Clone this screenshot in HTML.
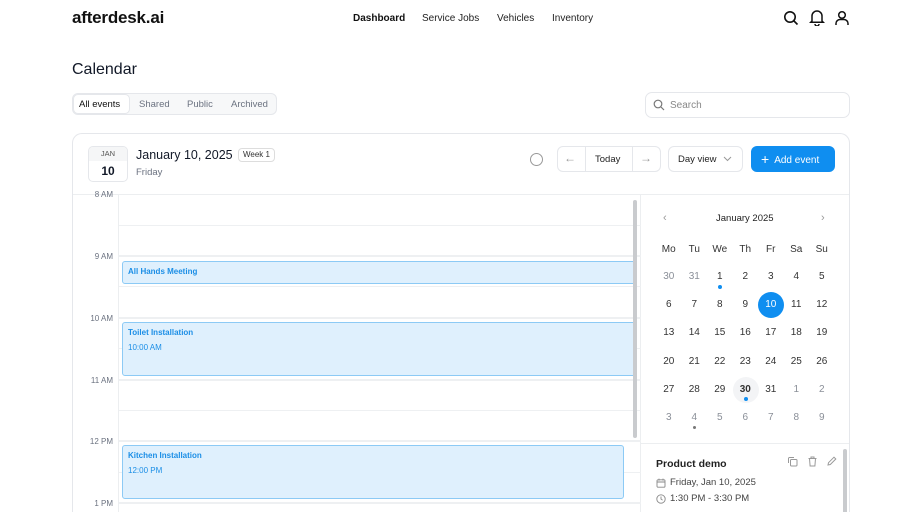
<!DOCTYPE html>
<html><head><meta charset="utf-8"><style>
*{box-sizing:border-box;margin:0;padding:0}
html,body{width:922px;height:512px;overflow:hidden}
body{background:#fff;font-family:"Liberation Sans",sans-serif;color:#111827;position:relative}
.a{position:absolute}
.logo{left:72px;top:8px;font-size:17px;font-weight:700;letter-spacing:-0.2px;color:#111}
.nav{top:13px;font-size:10px;color:#222}
.muted{color:#6b7280}
.card{left:72px;top:133px;width:778px;height:379px;border:1px solid #e5e7eb;border-bottom:none;border-radius:10px 10px 0 0;overflow:hidden}
.btn{border:1px solid #e5e7eb;border-radius:6px;background:#fff}
.hl{left:46px;width:522px;height:1px;background:#eef0f2}
.tl{width:40px;text-align:right;font-size:8px;color:#6b7280;left:0}
.ev{background:#dff0fd;border:1px solid #8ccaf5;border-radius:3px;color:#1b8ee6;font-size:8px;font-weight:700;padding:5px 5px}
.ev span{display:block;font-weight:400;margin-top:6px}
.d{width:25.5px;text-align:center;font-size:10px;color:#333}
.g{color:#8a8f98}
</style></head><body>
<div class="a logo">afterdesk.ai</div>
<div class="a nav" style="left:353px;font-weight:700;color:#111">Dashboard</div>
<div class="a nav" style="left:422px">Service Jobs</div>
<div class="a nav" style="left:497px">Vehicles</div>
<div class="a nav" style="left:552px">Inventory</div>
<svg class="a" style="left:783px;top:10px" width="16" height="16" viewBox="0 0 16 16" fill="none" stroke="#111" stroke-width="1.6"><circle cx="7" cy="7" r="5.2"/><path d="M11 11l3.5 3.5"/></svg>
<svg class="a" style="left:809px;top:9px" width="16" height="17" viewBox="0 0 16 17" fill="none" stroke="#111" stroke-width="1.5"><path d="M3 12V7a5 5 0 0110 0v5l1.3 1.3H1.7z"/><path d="M6 15a2 2 0 004 0"/></svg>
<svg class="a" style="left:834px;top:10px" width="16" height="16" viewBox="0 0 16 16" fill="none" stroke="#111" stroke-width="1.5"><circle cx="8" cy="5" r="3.3"/><path d="M2 15v-1.5a4 4 0 014-4h4a4 4 0 014 4V15"/></svg>

<div class="a" style="left:72px;top:61px;font-size:16px;font-weight:500">Calendar</div>
<div class="a" style="left:72px;top:93px;width:205px;height:22px;border:1px solid #e5e7eb;border-radius:6px;background:#f7f8f9"></div>
<div class="a btn" style="left:73px;top:94px;width:57px;height:20px;border-radius:5px"></div>
<div class="a" style="left:79px;top:99px;font-size:9.5px;color:#111">All events</div>
<div class="a muted" style="left:139px;top:99px;font-size:9.5px">Shared</div>
<div class="a muted" style="left:187px;top:99px;font-size:9.5px">Public</div>
<div class="a muted" style="left:231px;top:99px;font-size:9.5px">Archived</div>
<div class="a btn" style="left:645px;top:92px;width:205px;height:26px;border-radius:7px"></div>
<svg class="a" style="left:653px;top:99px" width="12" height="12" viewBox="0 0 12 12" fill="none" stroke="#777" stroke-width="1.2"><circle cx="5" cy="5" r="3.8"/><path d="M8 8l3 3"/></svg>
<div class="a" style="left:670px;top:100px;font-size:10px;color:#888">Search</div>

<div class="a card">
 <div class="a" style="left:15px;top:12px;width:40px;height:36px;border:1px solid #e5e7eb;border-radius:5px;overflow:hidden">
  <div style="height:14px;background:#f5f6f7;font-size:7.5px;text-align:center;line-height:14px;color:#555">JAN</div>
  <div style="font-size:12px;font-weight:700;text-align:center;line-height:20px">10</div>
 </div>
 <div class="a" style="left:63px;top:14px;font-size:12.5px;font-weight:500">January 10, 2025</div>
 <div class="a" style="left:165px;top:14px;height:14px;border:1px solid #ddd;border-radius:4px;font-size:8px;padding:0 4px;line-height:12px;color:#333">Week 1</div>
 <div class="a muted" style="left:63px;top:33px;font-size:9.5px">Friday</div>
 <div class="a" style="left:457px;top:19px;width:13px;height:13px;border:1.3px solid #999;border-radius:50%"></div>
 <div class="a btn" style="left:484px;top:12px;width:104px;height:26px"></div>
 <div class="a" style="left:512px;top:12px;width:1px;height:26px;background:#e5e7eb"></div>
 <div class="a" style="left:559px;top:12px;width:1px;height:26px;background:#e5e7eb"></div>
 <div class="a" style="left:491px;top:17px;font-size:12px;color:#999">←</div>
 <div class="a" style="left:522px;top:20px;font-size:9.5px;font-weight:500;color:#222">Today</div>
 <div class="a" style="left:567px;top:17px;font-size:12px;color:#999">→</div>
 <div class="a btn" style="left:595px;top:12px;width:75px;height:26px"></div>
 <div class="a" style="left:605px;top:20px;font-size:9.5px;color:#222">Day view</div>
 <svg class="a" style="left:650px;top:22px" width="9" height="6" viewBox="0 0 9 6" fill="none" stroke="#999" stroke-width="1"><path d="M1 1l3.5 3.5L8 1"/></svg>
 <div class="a" style="left:678px;top:12px;width:84px;height:26px;background:#0f8ef0;border-radius:6px;color:#fff;font-size:10px;line-height:26px;padding-left:10px"><span style="font-size:14px;vertical-align:-1px">+</span>&nbsp; Add event</div>
 <div class="a" style="left:0;top:60px;width:778px;height:1px;background:#eceef0"></div>
 <div class="a" style="left:45px;top:61px;width:1px;height:318px;background:#eceef0"></div>
 <div class="a" style="left:567px;top:61px;width:1px;height:318px;background:#eceef0"></div>
 <div class="a tl" style="top:56px">8 AM</div>
 <div class="a hl" style="top:91px"></div>
 <div class="a hl" style="top:121px;height:2px"></div>
 <div class="a tl" style="top:118px">9 AM</div>
 <div class="a hl" style="top:152px"></div>
 <div class="a hl" style="top:183px;height:2px"></div>
 <div class="a tl" style="top:180px">10 AM</div>
 <div class="a hl" style="top:214px"></div>
 <div class="a hl" style="top:245px;height:2px"></div>
 <div class="a tl" style="top:242px">11 AM</div>
 <div class="a hl" style="top:276px"></div>
 <div class="a hl" style="top:306px;height:2px"></div>
 <div class="a tl" style="top:303px">12 PM</div>
 <div class="a hl" style="top:338px"></div>
 <div class="a hl" style="top:368px;height:2px"></div>
 <div class="a tl" style="top:365px">1 PM</div>
 <div class="a ev" style="left:49px;top:127px;width:514px;height:23px">All Hands Meeting</div>
 <div class="a ev" style="left:49px;top:188px;width:514px;height:54px">Toilet Installation<span>10:00 AM</span></div>
 <div class="a ev" style="left:49px;top:311px;width:502px;height:54px">Kitchen Installation<span>12:00 PM</span></div>
 <div class="a" style="left:560px;top:66px;width:4px;height:238px;background:#c9cbce;border-radius:2px"></div>
 <div class="a" style="left:590px;top:78px;font-size:11px;color:#999">‹</div>
 <div class="a" style="left:748px;top:78px;font-size:11px;color:#999">›</div>
 <div class="a" style="left:643px;top:79px;font-size:9.5px;font-weight:500;color:#222">January 2025</div>
 <div class="a" style="left:583px;top:110px;width:180px;display:flex;font-size:9.5px;color:#333"><div class="d">Mo</div><div class="d">Tu</div><div class="d">We</div><div class="d">Th</div><div class="d">Fr</div><div class="d">Sa</div><div class="d">Su</div></div>
 <div class="a" style="left:685px;top:158px;width:26px;height:26px;border-radius:50%;background:#0f8ef0"></div>
 <div class="a" style="left:660px;top:243px;width:26px;height:26px;border-radius:50%;background:#f3f4f6"></div>
 <div class="a" style="left:583px;top:129px;width:180px;font-size:9.5px;line-height:28.2px">
  <div style="display:flex"><div class="d g">30</div><div class="d g">31</div><div class="d">1</div><div class="d">2</div><div class="d">3</div><div class="d">4</div><div class="d">5</div></div>
  <div style="display:flex"><div class="d">6</div><div class="d">7</div><div class="d">8</div><div class="d">9</div><div class="d" style="color:#fff">10</div><div class="d">11</div><div class="d">12</div></div>
  <div style="display:flex"><div class="d">13</div><div class="d">14</div><div class="d">15</div><div class="d">16</div><div class="d">17</div><div class="d">18</div><div class="d">19</div></div>
  <div style="display:flex"><div class="d">20</div><div class="d">21</div><div class="d">22</div><div class="d">23</div><div class="d">24</div><div class="d">25</div><div class="d">26</div></div>
  <div style="display:flex"><div class="d">27</div><div class="d">28</div><div class="d">29</div><div class="d" style="font-weight:700">30</div><div class="d">31</div><div class="d g">1</div><div class="d g">2</div></div>
  <div style="display:flex"><div class="d g">3</div><div class="d g">4</div><div class="d g">5</div><div class="d g">6</div><div class="d g">7</div><div class="d g">8</div><div class="d g">9</div></div>
 </div>
 <div class="a" style="left:644.5px;top:151px;width:4px;height:4px;border-radius:50%;background:#0f8ef0"></div>
 <div class="a" style="left:670.5px;top:263px;width:4px;height:4px;border-radius:50%;background:#0f8ef0"></div>
 <div class="a" style="left:620px;top:292px;width:3px;height:3px;border-radius:50%;background:#777"></div>
 <div class="a" style="left:568px;top:309px;width:210px;height:1px;background:#eceef0"></div>
 <div class="a" style="left:770px;top:315px;width:4px;height:64px;background:#c9cbce;border-radius:2px 2px 0 0"></div>
 <div class="a" style="left:583px;top:324px;font-size:10.5px;font-weight:700;color:#222">Product demo</div>
 <svg class="a" style="left:714px;top:322px" width="11" height="11" viewBox="0 0 11 11" fill="none" stroke="#999" stroke-width="1"><rect x="3.5" y="3.5" width="6.5" height="6.5" rx="1"/><path d="M7 1.5H2.5a1 1 0 00-1 1V7"/></svg>
 <svg class="a" style="left:734px;top:322px" width="11" height="11" viewBox="0 0 11 11" fill="none" stroke="#999" stroke-width="1"><path d="M1.5 2.5h8M4 2.5V1h3v1.5M2.5 2.5l.6 7.5h4.8l.6-7.5"/></svg>
 <svg class="a" style="left:753px;top:322px" width="11" height="11" viewBox="0 0 11 11" fill="none" stroke="#999" stroke-width="1"><path d="M2 9l.5-2.3L8 1.2l1.8 1.8-5.5 5.5z"/></svg>
 <svg class="a" style="left:583px;top:344px" width="10" height="10" viewBox="0 0 10 10" fill="none" stroke="#888" stroke-width="0.9"><rect x="1" y="1.8" width="8" height="7.4" rx="1"/><path d="M1 4h8M3 .6v2M7 .6v2"/></svg>
 <div class="a" style="left:597px;top:343px;font-size:9.5px;color:#444">Friday, Jan 10, 2025</div>
 <svg class="a" style="left:583px;top:360px" width="10" height="10" viewBox="0 0 10 10" fill="none" stroke="#888" stroke-width="0.9"><circle cx="5" cy="5" r="4.2"/><path d="M5 2.5V5l1.6 1.2"/></svg>
 <div class="a" style="left:597px;top:359px;font-size:9.5px;color:#444">1:30 PM - 3:30 PM</div>
</div>
</body></html>
